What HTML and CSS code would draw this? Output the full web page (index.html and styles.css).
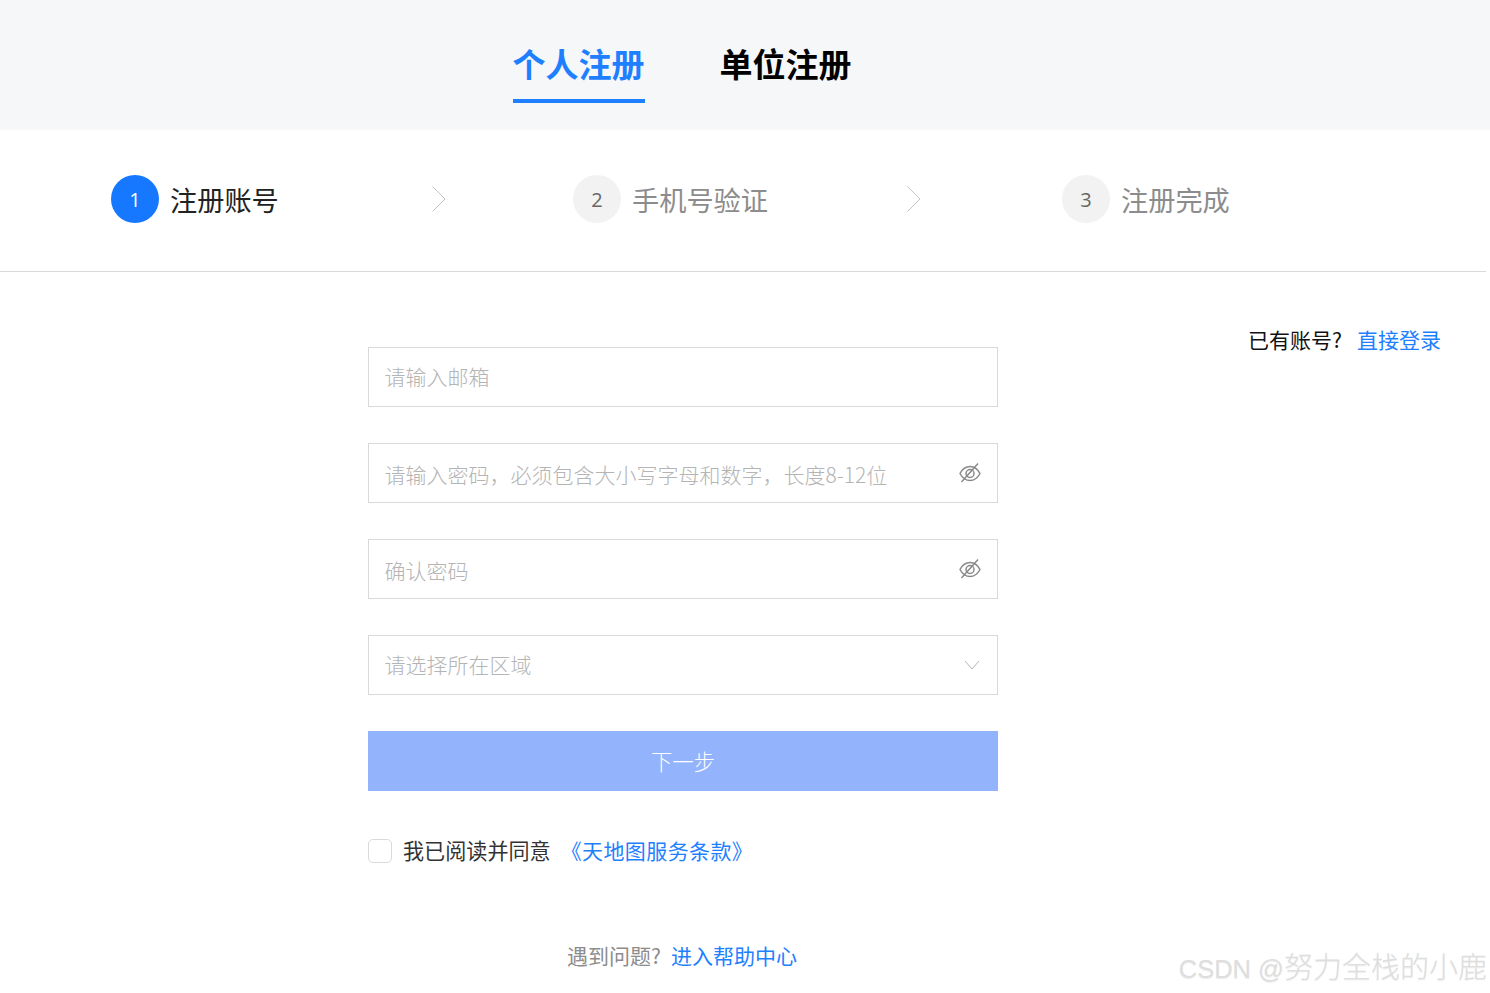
FILE: index.html
```html
<!DOCTYPE html>
<html lang="zh-CN">
<head>
<meta charset="utf-8">
<title>注册</title>
<link rel="stylesheet" href="styles.css">
</head>
<body>
<header class="tabs">
  <a class="tab tab-active">个人注册</a>
  <a class="tab">单位注册</a>
</header>
<section class="steps">
  <div class="step step-one">
    <span class="num num-on">1</span><span class="label label-on">注册账号</span>
  </div>
  <svg class="arrow arrow-one" width="16" height="28" viewBox="0 0 16 28"><path d="M1.5 1.5 14 14 1.5 26.5" fill="none" stroke="#c4c4c4" stroke-width="1"/></svg>
  <div class="step step-two">
    <span class="num">2</span><span class="label">手机号验证</span>
  </div>
  <svg class="arrow arrow-two" width="16" height="28" viewBox="0 0 16 28"><path d="M1.5 1.5 14 14 1.5 26.5" fill="none" stroke="#c4c4c4" stroke-width="1"/></svg>
  <div class="step step-three">
    <span class="num">3</span><span class="label">注册完成</span>
  </div>
</section>
<main class="main">
  <p class="login">已有账号?<a class="link login-link">直接登录</a></p>
  <form class="form">
    <div class="field"><span class="ph">请输入邮箱</span></div>
    <div class="field"><span class="ph ph-low">请输入密码，必须包含大小写字母和数字，长度8-12位</span>
      <svg class="eye" width="22" height="20" viewBox="0 0 22 20"><g fill="none" stroke="#8a8a8a" stroke-width="1.5"><path d="M1 10.500C3.500 5.800 7 3.500 11 3.500S18.500 5.800 21 10.500C18.500 15.200 15 17.500 11 17.500S3.500 15.200 1 10.500Z"/><circle cx="11" cy="10.500" r="4"/><path d="M19 .5 2.500 19"/></g></svg>
    </div>
    <div class="field"><span class="ph ph-low ph-confirm">确认密码</span>
      <svg class="eye" width="22" height="20" viewBox="0 0 22 20"><g fill="none" stroke="#8a8a8a" stroke-width="1.5"><path d="M1 10.500C3.500 5.800 7 3.500 11 3.500S18.500 5.800 21 10.500C18.500 15.200 15 17.500 11 17.500S3.500 15.200 1 10.500Z"/><circle cx="11" cy="10.500" r="4"/><path d="M19 .5 2.500 19"/></g></svg>
    </div>
    <div class="field"><span class="ph">请选择所在区域</span>
      <svg class="chev" width="16" height="10" viewBox="0 0 16 10"><path d="M1 1 8 9 15 1" fill="none" stroke="#b5b5b5" stroke-width="1"/></svg>
    </div>
    <button class="next" type="button">下一步</button>
    <div class="agree">
      <span class="check"></span><span class="agree-text">我已阅读并同意</span><a class="link terms">《天地图服务条款》</a>
    </div>
  </form>
  <p class="help">遇到问题?<a class="link help-link">进入帮助中心</a></p>
  <span class="mark"><span class="mark-latin">CSDN @</span>努力全栈的小鹿</span>
</main>
</body>
</html>
```

FILE: styles.css
```css
* { box-sizing: border-box; }
html, body { margin: 0; padding: 0; }
body {
  width: 1490px;
  height: 993px;
  overflow: hidden;
  background: #fff;
  font-family: "Noto Sans CJK SC", "Noto Sans", sans-serif;
  color: #222;
}
.tabs {
  height: 130px;
  background: #f6f7f9;
  display: flex;
  padding: 28px 0 0 513px;
  gap: 75px;
}
.tab {
  width: 132px;
  height: 75px;
  font-size: 33px;
  line-height: 70px;
  font-weight: 700;
  color: #000;
  white-space: nowrap;
  text-indent: -0.500px;
}
.tab-active { color: #1e80ff; border-bottom: 4px solid #1e80ff; }
.steps {
  position: relative;
  width: 1486px;
  height: 142px;
  border-bottom: 1px solid #d9d9d9;
}
.step { position: absolute; top: 45px; height: 48px; display: flex; align-items: flex-start; }
.step-one { left: 111px; }
.step-two { left: 573px; }
.step-three { left: 1062px; }
.num {
  width: 48px;
  height: 48px;
  border-radius: 50%;
  background: #f2f2f2;
  color: #666;
  font-family: "Open Sans", sans-serif;
  font-size: 20px;
  line-height: 50px;
  text-align: center;
}
.num-on { background: #1677ff; color: #fff; }
.label { margin-left: 11px; height: 48px; font-size: 27.200px; line-height: 48px; color: #8c8c8c; white-space: nowrap; }
.label-on { color: #222; }
.arrow { position: absolute; top: 55px; }
.arrow-one { left: 431px; }
.arrow-two { left: 906px; }
.main { position: relative; height: 721px; }
.login {
  position: absolute;
  top: 53px;
  left: 1248px;
  margin: 0;
  font-size: 21px;
  line-height: 28px;
  color: #111;
  white-space: nowrap;
}
.login-link { margin-left: 15px; }
.link { color: #1e80ff; }
.form {
  position: absolute;
  left: 368px;
  top: 75px;
  width: 630px;
  display: flex;
  flex-direction: column;
  gap: 36px;
}
.field {
  height: 60px;
  border: 1px solid #d9d9d9;
  padding: 0 16px 0 15.500px;
  display: flex;
  align-items: center;
  justify-content: space-between;
}
.ph { font-size: 21px; font-weight: 300; line-height: 54px; padding-bottom: 2px; color: #b4b4b4; white-space: nowrap; }
.ph-low { padding-top: 2px; padding-bottom: 0; }
.eye { margin-right: 0; margin-top: -1px; }
.chev { margin-right: 1px; }
.next {
  height: 60px;
  border: 0;
  padding: 0 0 2px;
  background: #94b3fd;
  color: #fff;
  font-family: inherit;
  font-size: 21.300px;
  font-weight: 300;
}
.agree { display: flex; align-items: center; height: 24px; margin-top: 12px; }
.check { width: 24px; height: 24px; border: 1px solid #d9d9d9; border-radius: 5px; flex: none; }
.agree-text { margin-left: 11px; margin-top: -2px; font-size: 21.100px; line-height: 22px; color: #333; white-space: nowrap; }
.terms { margin-left: 10px; margin-top: -2px; font-size: 21px; line-height: 22px; white-space: nowrap; letter-spacing: .4px; }
.help {
  position: absolute;
  top: 669px;
  left: 567px;
  margin: 0;
  font-size: 21px;
  line-height: 28px;
  color: #8c8c8c;
  white-space: nowrap;
}
.help-link { margin-left: 10px; }
.mark {
  position: absolute;
  right: 3px;
  top: 675px;
  font-family: "Noto Sans CJK SC", sans-serif;
  font-size: 29px;
  font-weight: 300;
  line-height: 36px;
  color: #dedede;
  text-shadow: 0 1px 1px rgba(0,0,0,.08);
  white-space: nowrap;
}
.mark-latin { font-family: "Liberation Sans", sans-serif; font-size: 25.500px; }
```
